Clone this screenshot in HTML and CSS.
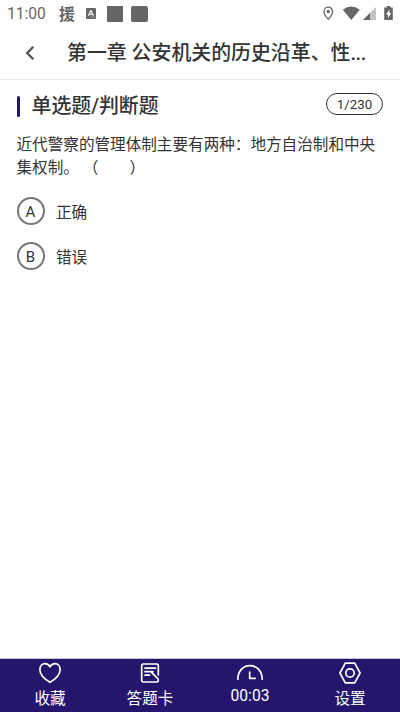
FILE: index.html
```html
<!DOCTYPE html>
<html lang="zh-CN">
<head>
<meta charset="utf-8">
<title>单选题/判断题</title>
<link rel="stylesheet" href="styles.css">
</head>
<body>
<div class="app">
  <div class="status">
    <span class="clock">11:00</span>
    <span class="notice">援</span>
    <svg class="badge-a" width="10" height="11" viewBox="0 0 10 11"><rect width="10" height="11" rx="1" fill="#666"/><path d="M2.500 7.800 4.600 2.800h.6l2.100 5M3.400 6.200h3" fill="none" stroke="#fff" stroke-width="1.100"/><path d="M5.500 9h1M7.500 9h1" stroke="#ddd" stroke-width=".8"/></svg>
    <span class="square"></span>
    <span class="square square-soft"></span>
    <svg class="system" width="72" height="16" viewBox="0 0 72 16">
      <path d="M5.300 1.200a4.300 4.300 0 0 0-4.300 4.300C1 8.700 5.300 13.400 5.300 13.400S9.600 8.700 9.600 5.500A4.300 4.300 0 0 0 5.300 1.200Z" fill="none" stroke="#666" stroke-width="1.300"/>
      <circle cx="5.300" cy="5.500" r="1.700" fill="#666"/>
      <path d="M19.800 3.700Q28.300-2.500 36.800 3.700L28.300 14Z" fill="#666"/>
      <path d="M40 14 53 1v13Z" fill="#c4c4c4"/><path d="M40 14 47 7v7Z" fill="#666"/>
      <path d="M63.700 0h3.600v1.500h2.500V14h-8.600V1.500h2.500Z" fill="#666"/><path d="m66.500 3.500-3.500 5h2v3.500l3.300-5h-1.800Z" fill="#fff"/>
    </svg>
  </div>
  <header class="header">
    <svg class="back" width="10" height="16" viewBox="0 0 10 16"><path d="M8.300 1.800 2.200 8l6.100 6.200" fill="none" stroke="#555" stroke-width="2.300"/></svg>
    <h1 class="title">第一章 公安机关的历史沿革、性<span class="more">...</span></h1>
  </header>
  <main class="content">
    <div class="heading">
      <span class="bar"></span>
      <h2 class="kind">单选题/判断题</h2>
      <span class="count">1/230</span>
    </div>
    <p class="question">近代警察的管理体制主要有两种：地方自治制和中央集权制。 （&#12288;&#12288;）</p>
    <div class="option"><span class="letter">A</span><span>正确</span></div>
    <div class="option"><span class="letter">B</span><span>错误</span></div>
  </main>
  <nav class="tabs">
    <div class="tab">
      <svg width="24" height="24" viewBox="0 0 24 24"><path d="M12 21.300C7 18.300 1.900 14 1.900 8.700 1.900 5.200 4 2.700 7 2.700c2.300 0 4 1.200 5 3.100 1-1.900 2.700-3.100 5-3.100 3 0 5.100 2.500 5.100 6 0 5.300-5.100 9.600-10.100 12.600Z"/></svg>
      <span>收藏</span>
    </div>
    <div class="tab">
      <svg width="24" height="24" viewBox="0 0 24 24"><path d="M20.300 14V4.500a1.500 1.500 0 0 0-1.500-1.500H5.200a1.500 1.500 0 0 0-1.500 1.500v15A1.500 1.500 0 0 0 5.200 21h13.600a1.500 1.500 0 0 0 1.500-1.500M7 7.200h10.500M7 10.700h8M7 14.200h4.500M14 11.800l6.300 6.300"/></svg>
      <span>答题卡</span>
    </div>
    <div class="tab tab-timer">
      <svg width="28" height="24" viewBox="0 0 28 24"><path d="M1.800 18.300C1.800 10 7.200 4.700 14 4.700s12.200 5.300 12.200 13.600M13.700 11v6.300h5.500"/></svg>
      <span>00:03</span>
    </div>
    <div class="tab">
      <svg width="24" height="24" viewBox="0 0 24 24"><path d="M7.300 2.200h9.400L22.100 12l-5.400 9.800H7.300L1.900 12Z"/><circle cx="12" cy="12" r="4.200"/></svg>
      <span>设置</span>
    </div>
  </nav>
</div>
</body>
</html>
```
FILE: styles.css
```css
* { box-sizing: border-box; }
body {
  margin: 0;
  background: #fff;
  color: #333;
  font-family: Roboto, "Noto Sans CJK SC", sans-serif;
}
.app { width: 400px; height: 712px; display: flex; flex-direction: column; }
.status {
  height: 27px;
  display: flex;
  align-items: center;
  padding: 0 5px 0 7px;
  color: #666;
}
.clock { width: 52px; font-size: 15.6px; line-height: 27px; padding-top: 2px; }
.notice { width: 27px; font-size: 16px; font-weight: 700; line-height: 26px; padding-top: 2px; }
.badge-a { margin-right: 11px; }
.square { width: 16px; height: 16px; margin-right: 8px; background: #666; }
.square-soft { width: 17px; border-radius: 2px; }
.system { margin-left: auto; }
.header {
  height: 53px;
  display: flex;
  align-items: center;
  border-bottom: 1px solid #ebebeb;
  padding-left: 25px;
}
.back { flex: none; margin-right: 32px; }
.title {
  margin: 0;
  padding-top: 2px;
  font-size: 19.9px;
  font-weight: 500;
  line-height: 30px;
  white-space: nowrap;
}
.more { letter-spacing: -.4px; }
.content { flex: 1; padding: 10px 17px 0 16.5px; }
.heading { display: flex; align-items: center; height: 30px; }
.bar { width: 3px; height: 21px; margin: 2px 12px 0 0; border-radius: 1.5px; background: #25156d; }
.kind { margin: 0; padding-top: 3px; font-size: 19.9px; font-weight: 500; line-height: 30px; }
.count {
  width: 57px;
  height: 22px;
  margin: -2px 0 0 auto;
  border: 1px solid #333;
  border-radius: 11px;
  font-size: 13.3px;
  line-height: 22px;
  text-align: center;
}
.question { margin: 14px 0 17px; font-size: 15.6px; line-height: 23px; text-spacing-trim: space-all; }
.option { display: flex; align-items: center; height: 28px; margin-bottom: 16.5px; font-size: 15.6px; }
.letter {
  width: 28px;
  height: 28px;
  margin-right: 11.5px;
  border: 2px solid #777;
  border-radius: 50%;
  font-size: 15px;
  line-height: 26px;
  text-align: center;
}
.tabs {
  height: 54px;
  display: flex;
  background: #25156d;
  border-top: 1px solid #c9c5da;
  color: #fff;
  font-size: 15.6px;
}
.tab { flex: 1; display: flex; flex-direction: column; align-items: center; padding-top: 2px; line-height: 24px; }
.tab svg { fill: none; stroke: #fff; stroke-width: 1.7; stroke-linecap: round; stroke-linejoin: round; }
.tab span { margin-top: 2px; }
.tab-timer span { margin-top: -1px; }
```
